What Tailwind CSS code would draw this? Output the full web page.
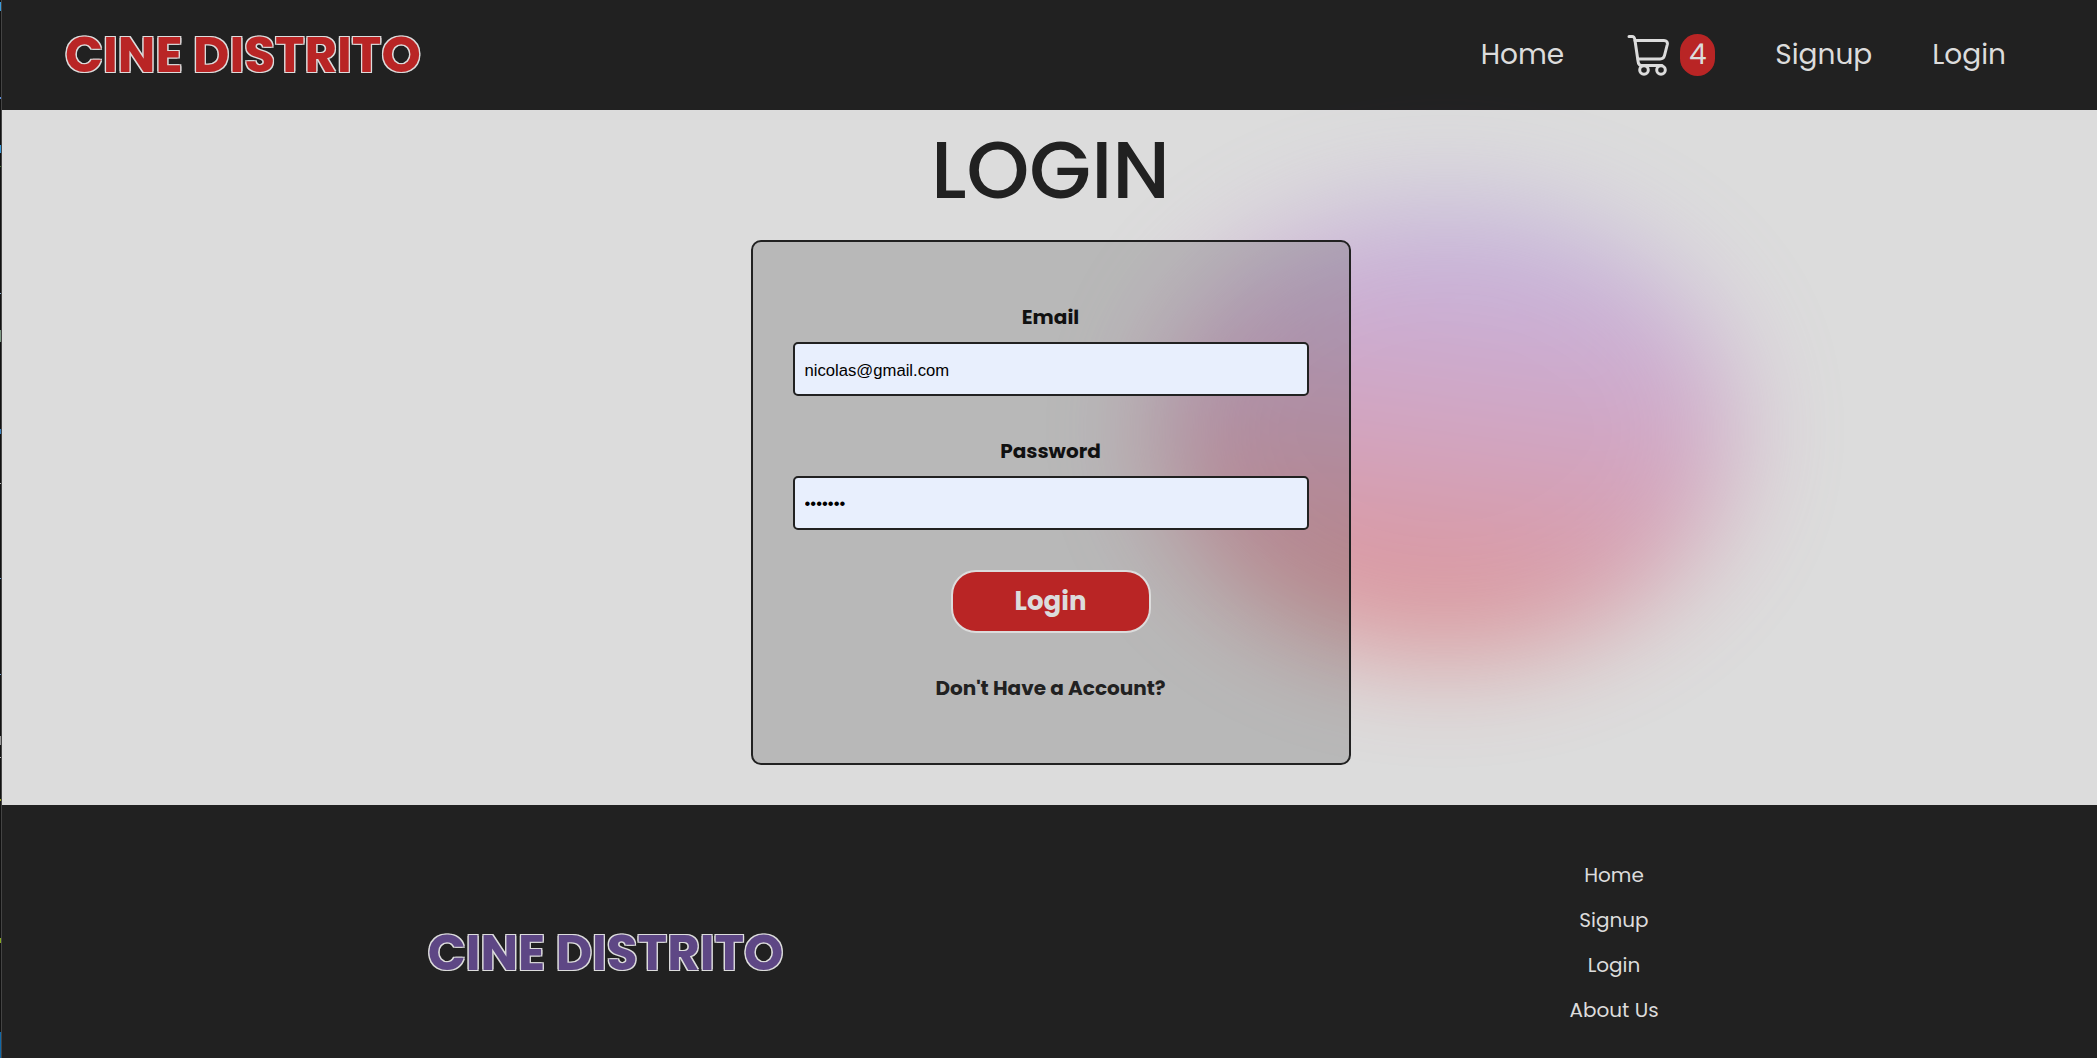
<!DOCTYPE html>
<html lang="en"><head><meta charset="utf-8"><title>Cine Distrito</title>
<script src="https://cdn.jsdelivr.net/npm/@tailwindcss/browser@4"></script></head>
<body class="h-[1058px] overflow-hidden bg-[#dcdcdc] font-['Poppins','Inter',sans-serif] text-[#212121]">
<div class="flex h-full">
<!-- window edge with slivers of the window behind it -->
<div class="flex w-[2px] shrink-0 flex-col border-r border-[#444] bg-[#111]">
<i class="mt-[2px] h-[9px] bg-[#3a9bdc]"></i><i class="mt-[86px] h-[2px] bg-[#5b8fe0]"></i><i class="mt-[46px] h-[8px] bg-[#3a9bdc]"></i><i class="mt-[13px] h-px bg-[#4f7a35]"></i><i class="mt-[126px] h-px bg-[#8fb0d0]"></i><i class="mt-[36px] h-[12px] bg-[#7d9a84]"></i><i class="mt-[87px] h-[5px] bg-[#3c86c4]"></i><i class="mt-[49px] h-px bg-[#bbb]"></i><i class="mt-[94px] h-px bg-[#6f9fd0]"></i><i class="mt-[95px] h-px bg-[#6f9fd0]"></i><i class="mt-[61px] h-[9px] bg-[#999]"></i><i class="mt-[12px] h-px bg-[#bbb]"></i><i class="mt-[41px] h-[2px] bg-[#9aa52a]"></i><i class="mt-[137px] h-[5px] bg-[#86a820]"></i><i class="mt-auto h-[26px] bg-[#0f68a8]"></i>
</div>
<div class="flex min-w-0 grow flex-col">
<header class="flex h-[110px] shrink-0 items-center justify-between bg-[#212121] pl-[63px] pr-[91px] text-[#dcdcdc]">
<div class="text-[50px] leading-none font-bold whitespace-nowrap text-[#b92525] [text-shadow:-1.25px_-1.25px_#dcdcdc,-1.25px_1.25px_#dcdcdc,1.25px_-1.25px_#dcdcdc,1.25px_1.25px_#dcdcdc]">CINE DISTRITO</div>
<nav class="flex items-center text-[28px] leading-[42px]">
<a class="mr-[63px]">Home</a>
<a class="mr-[60px] flex items-center gap-[11px]">
<svg class="h-[42px] w-[42px]" viewBox="0 0 42 42" fill="none" stroke="#dcdcdc" stroke-width="3" stroke-linecap="round" stroke-linejoin="round"><path d="M2 2.500h3c2 0 2.600 1 3 4l3 20.500c.3 2.500 1.300 4.500 3.500 4.500h20.500"/><path d="M8 6.500h29c2.500 0 3.800 1.700 3.300 4l-2.800 11c-.7 2.700-2 3.500-4.300 3.500h-22"/><circle cx="17" cy="36" r="4.300"/><circle cx="34" cy="36" r="4.300"/></svg>
<span class="flex h-[42px] w-[35px] items-center justify-center rounded-[18px] bg-[#b92525]">4</span></a>
<a class="mr-[60px]">Signup</a><a>Login</a></nav>
</header>
<main class="relative isolate flex h-[695px] shrink-0 flex-col items-center pl-[2px]">
<div class="absolute top-[93px] left-[1152px] -z-10 h-[454px] w-[582px] rounded-[50%] bg-linear-[188deg,#a080e0_8%,#b468c4_30%,#c65090_54%,#dc2c34_86%] opacity-40 blur-[54px]"></div>
<h1 class="mt-[20px] text-[80px] leading-[80px] font-medium">LOGIN</h1>
<form class="mt-[30px] flex h-[525px] w-[600px] flex-col items-center rounded-[10px] border-2 border-[#212121] bg-[#484848]/24 px-[40px] pt-[60px] text-[20px] font-bold">
<label class="h-[40px] leading-[30px] text-[#111]">Email</label>
<input class="h-[54px] w-full rounded-[5px] border-2 border-[#212121] bg-[#e8effd] px-[10px] pt-[3px] font-['Liberation_Sans',sans-serif] text-[16.67px] font-normal text-black" value="nicolas@gmail.com">
<label class="mt-[40px] h-[40px] leading-[30px] text-[#111]">Password</label>
<input type="password" class="h-[54px] w-full rounded-[5px] border-2 border-[#212121] bg-[#e8effd] px-[10px] pt-[2px] font-['Liberation_Sans',sans-serif] text-[16.67px] font-normal text-black" value="1234567">
<button type="button" class="mt-[40px] h-[63px] w-[200px] rounded-[25px] border-2 border-[#dcdcdc] bg-[#b92525] text-[26px] text-[#dcdcdc]">Login</button>
<a class="mt-[40px] leading-[30px]">Don't Have a Account?</a>
</form></main>
<footer class="flex grow bg-[#212121] text-[#dcdcdc]">
<div class="w-[1207px] pt-[124px] text-center text-[50px] leading-[48px] font-bold text-[#5e4785] [text-shadow:-1.25px_-1.25px_#dcdcdc,-1.25px_1.25px_#dcdcdc,1.25px_-1.25px_#dcdcdc,1.25px_1.25px_#dcdcdc]">CINE DISTRITO</div>
<nav class="flex w-[810px] flex-col items-center pt-[48px] text-[20px] leading-[45px]"><a>Home</a><a>Signup</a><a>Login</a><a>About Us</a></nav>
</footer></div></div></body></html>
